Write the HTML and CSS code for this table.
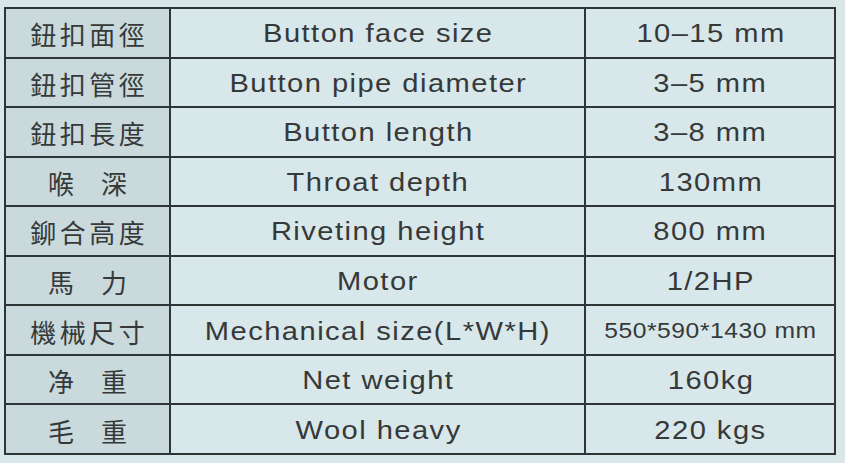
FILE: index.html
```html
<!DOCTYPE html>
<html>
<head>
<meta charset="utf-8">
<link rel="stylesheet" href="styles.css">
</head>
<body>
<div class="spec">
  <div class="cell label">鈕扣面徑</div><div class="cell name"><span class="t">Button face size</span></div><div class="cell val"><span class="t">10–15 mm</span></div>
  <div class="cell label">鈕扣管徑</div><div class="cell name"><span class="t">Button pipe diameter</span></div><div class="cell val"><span class="t">3–5 mm</span></div>
  <div class="cell label">鈕扣長度</div><div class="cell name"><span class="t">Button length</span></div><div class="cell val"><span class="t">3–8 mm</span></div>
  <div class="cell label wide">喉深</div><div class="cell name"><span class="t">Throat depth</span></div><div class="cell val"><span class="t">130mm</span></div>
  <div class="cell label">鉚合高度</div><div class="cell name"><span class="t">Riveting height</span></div><div class="cell val"><span class="t">800 mm</span></div>
  <div class="cell label wide">馬力</div><div class="cell name"><span class="t">Motor</span></div><div class="cell val"><span class="t">1/2HP</span></div>
  <div class="cell label">機械尺寸</div><div class="cell name"><span class="t">Mechanical size(L*W*H)</span></div><div class="cell val small"><span class="t">550*590*1430 mm</span></div>
  <div class="cell label wide">净重</div><div class="cell name"><span class="t">Net weight</span></div><div class="cell val"><span class="t">160kg</span></div>
  <div class="cell label wide">毛重</div><div class="cell name"><span class="t">Wool heavy</span></div><div class="cell val"><span class="t">220 kgs</span></div>
</div>
</body>
</html>
```
FILE: styles.css
```css
html, body {
  margin: 0;
  padding: 0;
  background: #dae7e9;
}
body {
  width: 845px;
  height: 463px;
  overflow: hidden;
}
.spec {
  margin: 7px 0 0 4px;
  width: 832px;
  height: 448px;
  box-sizing: border-box;
  padding: 2px;
  background: #2f3434;
  display: grid;
  grid-template-columns: 163px 413px 248px;
  grid-template-rows: repeat(9, 1fr);
  gap: 2px;
}
.cell {
  display: flex;
  align-items: center;
  justify-content: center;
  color: #363939;
  font-family: "Liberation Sans", Arial, sans-serif;
  font-size: 26px;
  padding-top: 2px;
  box-sizing: border-box;
  background: #d8e7e9;
}
.t {
  display: inline-block;
  white-space: nowrap;
  transform: scaleX(1.12);
  letter-spacing: 1.3px;
  padding-left: 1.3px;
}
.label {
  background: #c9d9dc;
  font-family: "Noto Sans CJK TC", "Noto Sans CJK SC", sans-serif;
  font-size: 26px;
  letter-spacing: 3.5px;
  padding-left: 3.5px;
}
.label.wide {
  letter-spacing: 27px;
  padding-left: 27px;
}
.val.small {
  font-size: 22px;
}
.val.small .t {
  letter-spacing: 0.5px;
  padding-left: 0.5px;
}
```
